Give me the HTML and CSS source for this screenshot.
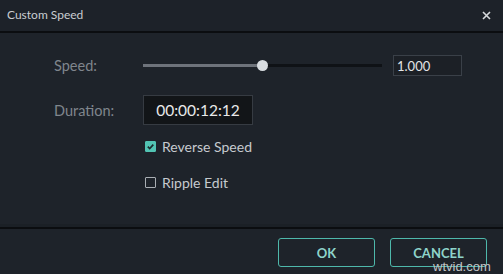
FILE: index.html
```html
<!DOCTYPE html>
<html>
<head>
<meta charset="utf-8">
<link rel="stylesheet" href="styles.css">
</head>
<body>
<div class="dialog">
  <div class="titlebar">
    <span class="title">Custom Speed</span>
    <svg class="close" width="9" height="9" viewBox="0 0 9 9"><path d="M1 1L8 8M8 1L1 8" stroke="#d6d9dc" stroke-width="1.6" fill="none"/></svg>
  </div>
  <div class="content">
    <div class="row speed-row">
      <span class="label">Speed:</span>
      <div class="slider">
        <div class="track"><div class="fill" style="width:50%"></div><div class="thumb" style="left:50%"></div></div>
      </div>
      <div class="speed-input">1.000</div>
    </div>
    <div class="row dur-row">
      <span class="label">Duration:</span>
      <div class="dur-input">00:00:12:12</div>
    </div>
    <div class="check-row rev">
      <span class="box checked"><svg width="11" height="11" viewBox="0 0 11 11"><path d="M2.8 5.6L4.7 7.5L8.3 3.6" stroke="#1b2a2c" stroke-width="1.6" fill="none"/></svg></span>
      <span class="check-label">Reverse Speed</span>
    </div>
    <div class="check-row rip">
      <span class="box"></span>
      <span class="check-label">Ripple Edit</span>
    </div>
  </div>
  <div class="footer">
    <button class="btn">OK</button>
    <button class="btn">CANCEL</button>
  </div>
  <span class="watermark">wtvid.com</span>
</div>
</body>
</html>
```
FILE: styles.css
```css
* { box-sizing: border-box; }
html, body { margin: 0; padding: 0; background: #1e232a; }
.dialog {
  position: relative;
  width: 503px;
  height: 274px;
  background: #1e232a;
  font-family: Lato, "Open Sans", sans-serif;
  overflow: hidden;
}
.titlebar {
  height: 33px;
  background: #1d2229;
  border-bottom: 2px solid #0b0d10;
  display: flex;
  align-items: center;
  justify-content: space-between;
  padding: 0 12px 2px 7px;
}
.title { color: #c9cdd1; font-size: 12px; }
.close { display: block; margin-top: 1px; }
.content {
  height: 196px;
  border-bottom: 2px solid #0b0d10;
  padding: 22px 0 0 54px;
  display: flex;
  flex-direction: column;
  box-shadow: inset 0 -3px 0 #1b2026;
}
.row { display: flex; align-items: center; }
.label { width: 89px; color: #80868d; font-size: 14.5px; }
.speed-row { height: 21px; }
.slider { width: 239px; display: flex; align-items: center; margin-right: 11px; }
.track {
  position: relative;
  width: 100%;
  height: 3px;
  background: #0f1216;
}
.fill { height: 3px; background: #6e737b; }
.thumb {
  position: absolute;
  top: -4px;
  width: 11px;
  height: 11px;
  margin-left: -5.5px;
  border-radius: 50%;
  background: #d9dde1;
}
.speed-input {
  width: 69px;
  height: 21px;
  border: 1px solid #3a4048;
  background: #1c2026;
  color: #e3e5e7;
  font-size: 13px;
  padding: 2px 0 0 3px;
  line-height: 16px;
}
.dur-row { margin-top: 19px; height: 30px; }
.dur-input {
  width: 110px;
  height: 30px;
  border: 1px solid #363b42;
  background: #121518;
  color: #e8e9ea;
  font-size: 15.5px;
  display: flex;
  align-items: center;
  justify-content: center;
}
.check-row {
  display: flex;
  align-items: center;
  height: 20px;
  padding-left: 91px;
}
.rev { margin-top: 11px; }
.rip { margin-top: 16px; }
.box {
  width: 11px;
  height: 11px;
  border: 1px solid #a9aeb3;
  border-radius: 1px;
  margin-right: 6px;
  display: flex;
}
.box.checked { background: #52c3b3; border-color: #52c3b3; }
.box svg { display: block; margin: -1px; }
.check-label { color: #c6cacf; font-size: 14px; }
.footer {
  height: 43px;
  display: flex;
  justify-content: flex-end;
  gap: 15px;
  padding: 9px 16px 0 0;
}
.btn {
  width: 97px;
  height: 29px;
  background: #1e232a;
  border: 1px solid #4eb8ab;
  border-radius: 3px;
  color: #8ed4ca;
  font-family: Lato, "Open Sans", sans-serif;
  font-size: 13px;
  font-weight: bold;
  padding: 0;
}
.watermark {
  position: absolute;
  left: 433px;
  top: 259px;
  font-family: "Liberation Sans", Arial, sans-serif;
  font-size: 13px;
  color: #c2c4c6;
}
```
